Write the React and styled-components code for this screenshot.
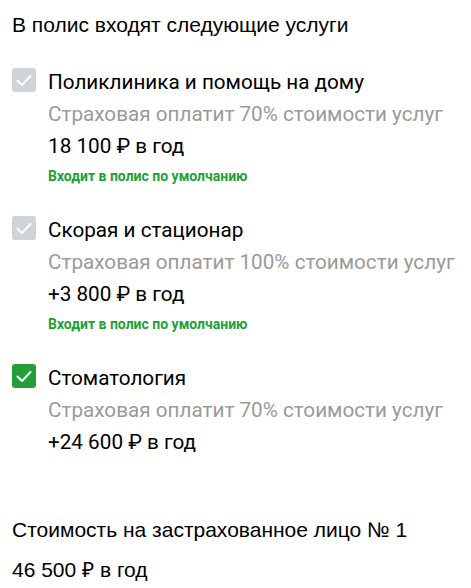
import React from "react";
import styled, { createGlobalStyle } from "styled-components";

const Global = createGlobalStyle`
  html, body { margin: 0; padding: 0; background: #fff; }
  body { font-family: "Liberation Sans", Arial, sans-serif; color: #000; }
`;

const Page = styled.div`
  padding: 13px 12px 0 12px;
  display: flex;
  flex-direction: column;
`;

const Heading = styled.div`
  font-family: "Liberation Sans", Arial, sans-serif;
  font-size: 21px;
  line-height: 24px;
  color: #000;
  white-space: nowrap;
`;

const List = styled.div`
  display: flex;
  flex-direction: column;
  gap: 30px;
  margin-top: 29px;
`;

const Item = styled.div`
  display: grid;
  grid-template-columns: 24px 1fr;
  column-gap: 12px;
  font-family: Roboto, "Noto Sans", sans-serif;
`;

const Box = styled.div`
  width: 24px;
  height: 24px;
  margin-top: 2px;
  border-radius: 3px;
  background: ${(p) => (p.$active ? "#21a038" : "#d0d3d8")};
  display: flex;
  align-items: center;
  justify-content: center;
`;

const Body = styled.div`
  display: flex;
  flex-direction: column;
`;

const Line = styled.div`
  font-size: 20.7px;
  line-height: 32px;
  color: ${(p) => (p.$muted ? "#9a9a9a" : "#000")};
  white-space: nowrap;
`;

const Note = styled.div`
  margin-top: 6px;
  font-size: 14px;
  line-height: 16px;
  font-weight: 700;
  color: #21a038;
  white-space: nowrap;
`;

const Footer = styled.div`
  margin-top: 60px;
  display: flex;
  flex-direction: column;
  gap: 16px;
`;

const Check = () => (
  <svg width="18" height="18" viewBox="0 0 18 18" fill="none">
    <path d="M2.5 9.5 L7 14 L15.5 5" stroke="#fff" strokeWidth="2" strokeLinecap="round" strokeLinejoin="round" />
  </svg>
);

const items = [
  {
    title: "Поликлиника и помощь на дому",
    sub: "Страховая оплатит 70% стоимости услуг",
    price: "18 100 ₽ в год",
    note: true,
    active: false,
  },
  {
    title: "Скорая и стационар",
    sub: "Страховая оплатит 100% стоимости услуг",
    price: "+3 800 ₽ в год",
    note: true,
    active: false,
  },
  {
    title: "Стоматология",
    sub: "Страховая оплатит 70% стоимости услуг",
    price: "+24 600 ₽ в год",
    note: false,
    active: true,
  },
];

export default function App() {
  return (
    <>
      <Global />
      <Page>
        <Heading>В полис входят следующие услуги</Heading>
        <List>
          {items.map((it) => (
            <Item key={it.title}>
              <Box $active={it.active}>
                <Check />
              </Box>
              <Body>
                <Line>{it.title}</Line>
                <Line $muted>{it.sub}</Line>
                <Line>{it.price}</Line>
                {it.note && <Note>Входит в полис по умолчанию</Note>}
              </Body>
            </Item>
          ))}
        </List>
        <Footer>
          <Heading>Стоимость на застрахованное лицо № 1</Heading>
          <Heading>46 500 ₽ в год</Heading>
        </Footer>
      </Page>
    </>
  );
}
